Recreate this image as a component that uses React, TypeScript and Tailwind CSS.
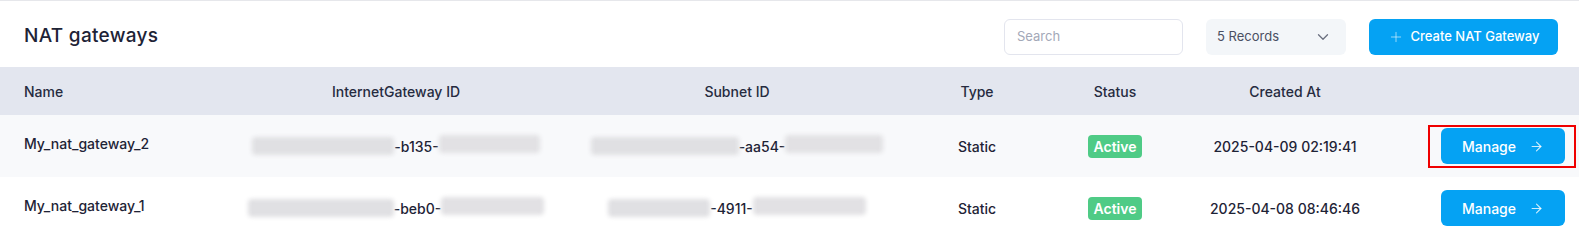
import { Plus, ChevronDown, ArrowRight } from "lucide-react";

type Row = {
  name: string;
  gw: [number, string, number];
  subnet: [number, string, number];
  created: string;
  highlight?: boolean;
  striped?: boolean;
};

const rows: Row[] = [
  { name: "My_nat_gateway_2", gw: [142, "-b135-", 101], subnet: [148, "-aa54-", 98], created: "2025-04-09 02:19:41", highlight: true, striped: true },
  { name: "My_nat_gateway_1", gw: [146, "-beb0-", 103], subnet: [102, "-4911-", 113], created: "2025-04-08 08:46:46" },
];

const cols = "grid grid-cols-[250px_292px_390px_90px_186px_154px_1fr] items-center";

function Masked({ parts }: { parts: [number, string, number] }) {
  return (
    <div className="flex items-center justify-center whitespace-nowrap">
      <span className="h-[18px] shrink-0 rounded-sm bg-[#e0e0e3] blur-[2px]" style={{ width: parts[0] }} />
      <span className="shrink-0">{parts[1]}</span>
      <span className="h-[18px] shrink-0 -translate-y-[2px] rounded-sm bg-[#e2e1e4] blur-[2px]" style={{ width: parts[2] }} />
    </div>
  );
}

export default function App() {
  return (
    <div className="w-[1579px] h-[240px] overflow-hidden border-t border-[#e6e7eb] bg-white text-[#1e2336] font-['Inter',sans-serif]">
      <div className="flex h-[66px] items-center px-6 pt-[5px]">
        <h1 className="text-[19px] font-medium tracking-[0.3px]">NAT gateways</h1>
        <div className="ml-auto flex items-center">
          <div className="flex h-[36px] w-[179px] items-center rounded-md border border-[#e3e5ee] px-3 text-[13px] text-[#a3a8b8]">
            Search
          </div>
          <div className="ml-[23px] flex h-[36px] w-[140px] items-center justify-between rounded-md bg-[#f3f6f9] pl-[11px] pr-[14px] text-[13px] text-[#4a4f62]">
            <span>5 Records</span>
            <ChevronDown className="h-[18px] w-[18px] text-[#6b7080]" strokeWidth={1.75} />
          </div>
          <button className="ml-[23px] mr-[-3px] flex h-[36px] w-[189px] items-center justify-center gap-[7px] rounded-md bg-[#05a2f3] text-[13px] font-medium text-white">
            <Plus className="h-[16px] w-[16px] text-white/70" strokeWidth={1.25} />
            Create NAT Gateway
          </button>
        </div>
      </div>

      <div className={`${cols} h-[48px] bg-[#e3e6ef] text-[14px] font-medium text-[#262b40]`}>
        <div className="pl-6">Name</div>
        <div className="text-center">InternetGateway ID</div>
        <div className="text-center">Subnet ID</div>
        <div className="text-center">Type</div>
        <div className="text-center">Status</div>
        <div className="text-center">Created At</div>
        <div />
      </div>

      {rows.map((r) => (
        <div
          key={r.name}
          className={`${cols} h-[62px] text-[14px] font-medium ${r.striped ? "bg-[#f8f9fb]" : "bg-white"}`}
        >
          <div className="pl-6 -translate-y-[3px]">{r.name}</div>
          <Masked parts={r.gw} />
          <Masked parts={r.subnet} />
          <div className="text-center">Static</div>
          <div className="flex justify-center">
            <span className="rounded-[4px] bg-[#4fcb86] px-[6px] py-[1px] text-[14px] font-semibold text-white">Active</span>
          </div>
          <div className="text-center">{r.created}</div>
          <div className="flex justify-end pr-[14px]">
            <div className="relative">
              {r.highlight && (
                <div className="absolute -left-[13px] -right-[11px] -top-[3px] -bottom-[4px] border-2 border-[#ef0000]" />
              )}
              <button className="flex h-[36px] w-[124px] items-center justify-center gap-[13px] rounded-md bg-[#05a2f3] text-[14px] font-medium text-white">
                Manage
                <ArrowRight className="h-[15px] w-[15px] text-white/80" strokeWidth={1.75} />
              </button>
            </div>
          </div>
        </div>
      ))}
    </div>
  );
}
